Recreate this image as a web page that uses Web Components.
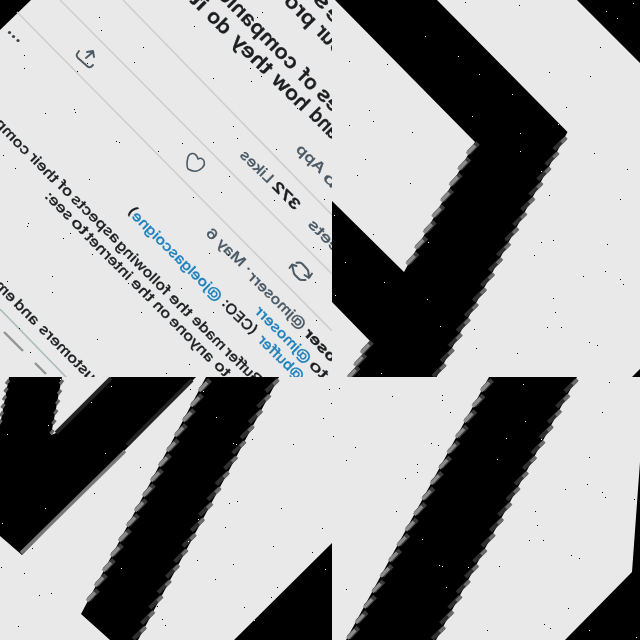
<!DOCTYPE html>
<html lang="en"><head><meta charset="utf-8"><title>Augmented tiles</title>
<style>body{margin:0;background:#e9e9e9;overflow:hidden}</style></head><body>
<mosaic-board></mosaic-board>
<script>
const NS='http://www.w3.org/2000/svg';
function el(n,a,t){const e=document.createElementNS(NS,n);for(const k in a)e.setAttribute(k,a[k]);if(t!=null)e.textContent=t;return e;}
class MosaicTile extends HTMLElement{
  constructor(){super();this.attachShadow({mode:'open'}).innerHTML='<style>:host{display:block;overflow:hidden;background:#e9e9e9}svg{display:block;width:100%;height:100%}text{font-family:Inter,"Liberation Sans",Arial,sans-serif;white-space:pre}</style><svg></svg>';}
  connectedCallback(){
    const s=this.shadowRoot.querySelector('svg'),v=this.getAttribute('view').split(' ');
    s.setAttribute('viewBox',v.join(' '));
    this.paint(s);
    const [x0,y0,w,h]=v.map(Number);
    for(const [list,c] of [[DARK,'#080808'],[LIGHT,'#fff']]){
      for(const [x,y] of list)if(x>=x0&&x<x0+w&&y>=y0&&y<y0+h)s.append(el('rect',{x,y,width:1,height:1,fill:c}));
    }
  }
  paint(){}
}
// Speckle positions, in board pixels
const DARK=[[99,17],[101,30],[143,47],[134,62],[24,55],[24,68],[77,71],[87,63],[45,113],[74,109],[75,112],[116,141],[119,142],[158,151],[3,155],[15,168],[89,179],
[262,12],[257,17],[194,26],[250,68],[261,76],[251,81],[213,78],[233,126],[237,138],[213,142],[182,143],[276,149],[229,176],[297,108],
[28,223],[27,226],[70,233],[63,238],[92,254],[52,276],[52,292],[7,281],[128,283],[141,312],[97,339],[19,328],[30,352],[166,373],
[193,197],[221,192],[274,200],[324,199],[320,249],[313,247],[209,253],[228,255],[315,282],[181,288],[213,312],[316,320],[300,336],[189,364],
[465,2],[519,5],[600,47],[590,76],[549,72],[349,61],[387,64],[369,110],[373,121],[349,125],[412,132],[566,107],[594,153],[627,169],[365,159],[357,175],[410,183],
[549,195],[620,199],[373,234],[541,242],[553,240],[607,244],[534,255],[605,271],[583,276],[620,279],[623,284],[553,298],[555,312],[547,327],[561,327],[474,329],[476,348],[517,353],[589,342],[597,345],
[140,467],[94,493],[32,548],[1,567],[24,573],[39,595],[51,593],[18,626],[123,634],[132,636],[122,638],[165,625],[162,619],[157,606],
[190,389],[329,389],[331,403],[323,418],[333,436],[293,444],[252,439],[229,503],[237,501],[281,508],[225,527],[322,528],[273,546],[312,552],[233,564],[197,560],[215,579],[277,587],[271,597],[244,607],
[339,388],[331,403],[392,396],[442,395],[442,400],[450,412],[609,382],[602,412],[333,436],[355,447],[346,460],[431,443],[438,445],[417,464],[417,472],[405,478],[396,511],[589,457],[587,484],[565,489],[602,492],[605,497],[634,499],[535,511],[537,525],[529,540],[543,540],[571,555],[579,558],[499,566],[346,589],[568,608],[544,624],[550,628],[487,630]];
const LIGHT=[[425,36],[458,56],[479,74],[512,94],[472,116],[520,133],[520,151],[558,124],[541,171],[606,11],[617,18],[633,3],[334,215],[345,262],[384,282],[335,295],[428,242],[427,299],[440,326],[381,373],
[60,379],[111,386],[91,402],[48,425],[7,434],[105,453],[45,508],[2,523],[121,568],[203,391],[216,417],[233,443],[236,444],[198,519],[188,541],[325,569],[254,620],[523,384],[525,421],[506,438],[497,459],[541,439],[422,539],[439,565],[442,566],[468,567],[446,587],[589,630],[636,637]];

class ThreadTile extends MosaicTile{
  paint(s){
    s.append(el('path',{d:'M0 0H31L0 30Z',fill:'#000'}));
    for(const [d,c,w] of [['M17 12L332 331','#cccecf',1.6],['M60 0L332 274','#cccecf',1.6],['M123 0L332 215','#cccecf',1.6],['M0 309L67 378','#aebcbb',1.6]])s.append(el('path',{d,stroke:c,'stroke-width':w,fill:'none'}));
    const g=el('g',{style:'filter:blur(.5px)'});s.append(g);
    // Each run is laid between the start and end of its baseline, reading up-left and mirrored.
    const run=(t,x1,y1,x2,y2,size,c,w)=>{
      const L=Math.hypot(x2-x1,y2-y1),a=(x2-x1)/L,b=(y2-y1)/L;
      g.append(el('text',{transform:`matrix(${a} ${b} ${b} ${-a} ${x1} ${y1})`,'font-size':size,textLength:L,lengthAdjust:'spacingAndGlyphs',fill:c,'font-weight':w?'bold':size>18?600:500,stroke:c,'stroke-width':.25},t));};
    const K='#1c1f21',G='#4a5864',B='#1c80bd',S=14,T=20;
    run('our',337,56,314,32,T,K);run('pro',309,28,283,2,T,K);
    run('and',332,140,308,116,T,K);run('how',302,112,270,81,T,K);run('they',265,76,230,42,T,K);run('do',224,36,205,17,T,K);run('it',200,12,189,1,T,K);
    run('es',334,114,315,95,T,K);run('of',311,92,296,77,T,K);run('companies',291,71,208,-13,T,K);
    run('e',336,26,324,14,T,K);run('s',323,11,312,0,T,K);
    run('b',332,189,322,178,S,G);run('App',320,174,295,150,S,G);
    run('372',295,211,271,187,S,K,1);run('Likes',268,184,239,156,S,G);
    run('eets',335,253,307,225,S,G);
    run('oser',331,363,303,334,S,K,1);run('@jmoserr',301,330,247,278,S,G);run('· May 6',247,274,205,234,S,G);
    run('to',323,380,308,366,S,K);run('@jmoserr',306,364,254,312,S,B);
    run('@buffer',299,382,257,341,S,B);run('(CEO:',252,336,220,305,S,K);run('@joelgascoigne',217,302,131,217,S,B);run(')',131,216,127,211,S,K);
    run('Buffer',256,385,223,353,S,K);run('made',221,351,191,321,S,K);run('the',187,318,168,299,S,K);
    run('following',165,296,115,246,S,K);run('aspects',115,244,70,200,S,K);run('of',68,198,56,186,S,K);run('their',53,184,28,158,S,K);run('comp',25,156,-6,124,S,K);
    run('to',225,378,213,366,S,K);run('anyone',209,363,168,322,S,K);run('on',166,320,152,306,S,K);run('the',149,303,130,284,S,K);run('internet',127,281,84,238,S,K);run('to',83,236,70,223,S,K);run('see:',68,221,44,197,S,K);
    run('customers',97,389,38,330,S,K);run('and',34,326,13,305,S,K);run('em',11,303,-6,286,S,K);
    for(const [x,y] of [[9.5,32.5],[13.5,36.5],[18,40.5]])g.append(el('circle',{cx:x,cy:y,r:1.6,fill:'#3b4145'}));
    const ic=(d,w=1.9)=>g.append(el('path',{d,stroke:'#4e5a63','stroke-width':w,fill:'none','stroke-linecap':'round','stroke-linejoin':'round'}));
    ic('M79 51L77 54Q76 56 78 58L87 66Q89 68 91 67L93 65M86 58L93 52M87 52L93 51L94 57');
    ic('M188 157C190 152 196 152 198 159C203 156 207 163 202 168C198 172 193 172 188 169C186 165 187 161 188 157Z',1.6);
    ic('M289.5 268L292 264.5L296.5 266M292.3 266L293.5 271.5Q293.7 273.5 295 275L299 279Q300 280 302 280L305.5 280M304.5 275L309 278L312 273.5M309 277L308.3 271.5Q308 270 307 269L302.5 264Q301 262.5 299.5 262.5L296.5 262.8',2);
    for(const d of ['M4 332L23 351','M35 363L46 374'])g.append(el('path',{d,stroke:'#929595','stroke-width':2.4}));
  }
}
// Runs angled teeth down an edge; side is +1 on a right-hand edge, -1 on a left-hand edge.
function teeth(s,x1,y1,x2,y2,side,step=15.1){
  const n=Math.max(1,Math.round((y2-y1)/step)),g=el('g',{style:'filter:blur(.5px)'});s.append(g);
  for(let i=0;i<n;i++){
    const x=x1+(x2-x1)*i/n,y=y1+(y2-y1)*i/n;
    if(side>0){
      g.append(el('path',{d:`M${x-.5} ${y+3}l-11.5 11.5`,stroke:'#303030','stroke-width':4.2}));
      g.append(el('path',{d:`M${x+.5} ${y+2.5}l-5 5`,stroke:'#6c6c6c','stroke-width':3.4}));
    }else{
      g.append(el('path',{d:`M${x+2} ${y+3}l-9.5 10`,stroke:'#3c3c3c','stroke-width':5}));
      g.append(el('path',{d:`M${x-1} ${y+5.5}l-8 8.5`,stroke:'#8a8a8a','stroke-width':3.4}));
    }
  }
}
const black=(s,d)=>s.append(el('path',{d,fill:'#000'}));
class ChevronTile extends MosaicTile{paint(s){
  black(s,'M335 0H437L567.5 132L436 378H350L370 341L332 302V201L404 272L475 142ZM577 0H640V63ZM632 377L640 369V377Z');
  teeth(s,566,135,437,377,1);teeth(s,476,140,407,266,-1);teeth(s,370,339,350,377,-1);}}
class BoltTile extends MosaicTile{paint(s){
  black(s,'M9 377H62L51 435L56 433L111 377H196L126 449L22 555L0 536V425ZM206 377H279L138 640H110L81 614Z M332 543V640H234Z');
  s.append(el('path',{d:'M125 451L21 553',stroke:'#777','stroke-width':3.5}));
  s.append(el('path',{d:'M111 378L56 433M192 380L127 445',stroke:'#242424','stroke-width':4}));
  teeth(s,278,377,137,640,1);teeth(s,208,377,88,602,-1);
  for(let i=0;i<6;i++){s.append(el('path',{d:`M${63-i*1.9} ${380+i*10}l-3 4M${9-i*1.5} ${380+i*8}l-3 4`,stroke:'#666','stroke-width':3}));}}}
class StripeTile extends MosaicTile{paint(s){
  black(s,'M489 377H577L436 640H346ZM640 462V640H565L632 572Z');
  teeth(s,577,377,436,640,1);teeth(s,490,377,348,640,-1);}}
class MosaicBoard extends HTMLElement{
  constructor(){super();this.attachShadow({mode:'open'}).innerHTML=`<style>:host{display:grid;width:640px;height:640px;grid-template:377px 263px/332px 308px}</style>
  <thread-tile view="0 0 332 377"></thread-tile><chevron-tile view="332 0 308 377"></chevron-tile><bolt-tile view="0 377 332 263"></bolt-tile><stripe-tile view="332 377 308 263"></stripe-tile>`;}
}
customElements.define('thread-tile',ThreadTile);
customElements.define('chevron-tile',ChevronTile);
customElements.define('bolt-tile',BoltTile);
customElements.define('stripe-tile',StripeTile);
customElements.define('mosaic-board',MosaicBoard);
</script></body></html>
